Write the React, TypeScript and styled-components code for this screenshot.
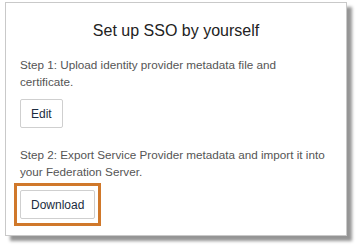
import React from "react";
import styled, { createGlobalStyle } from "styled-components";

const Global = createGlobalStyle`
  html, body { margin: 0; padding: 0; background: #ffffff; }
  body { font-family: "Liberation Sans", Arial, sans-serif; }
`;

const Page = styled.div`
  width: 359px;
  height: 248px;
  padding: 2px 0 0 5px;
  box-sizing: border-box;
`;

const Panel = styled.div`
  width: 342px;
  height: 234px;
  box-sizing: border-box;
  border: 1px solid #c9c9c9;
  background: #fff;
  box-shadow: 5px 5px 3px #959595;
  display: flex;
  flex-direction: column;
  padding: 0 14px;
`;

const Title = styled.h1`
  margin: 18px 0 0;
  font-size: 16px;
  font-weight: 400;
  color: #222;
  text-align: center;
  line-height: 20px;
`;

const StepText = styled.p<{ $top: number }>`
  margin: ${(p) => p.$top}px 0 0;
  font-size: 11.7px;
  line-height: 17px;
  color: #555;
`;

const Button = styled.button`
  font-family: "Liberation Sans", Arial, sans-serif;
  font-size: 12px;
  color: #1c2c40;
  background: #fff;
  border: 1px solid #cfcfcf;
  border-radius: 2px;
  padding: 0 10px;
  height: 29px;
`;

const ButtonRow = styled.div<{ $top: number }>`
  margin-top: ${(p) => p.$top}px;
  display: flex;
`;

const Highlight = styled.div`
  border: 3px solid #d0782a;
  padding: 4px 3px;
  margin-left: -6px;
  display: flex;
`;

export default function App() {
  return (
    <>
      <Global />
      <Page>
        <Panel>
          <Title>Set up SSO by yourself</Title>
          <StepText $top={15}>
            Step 1: Upload identity provider metadata file and certificate.
          </StepText>
          <ButtonRow $top={9}>
            <Button>Edit</Button>
          </ButtonRow>
          <StepText $top={18}>
            Step 2: Export Service Provider metadata and import it into your Federation Server.
          </StepText>
          <ButtonRow $top={3}>
            <Highlight>
              <Button>Download</Button>
            </Highlight>
          </ButtonRow>
        </Panel>
      </Page>
    </>
  );
}
